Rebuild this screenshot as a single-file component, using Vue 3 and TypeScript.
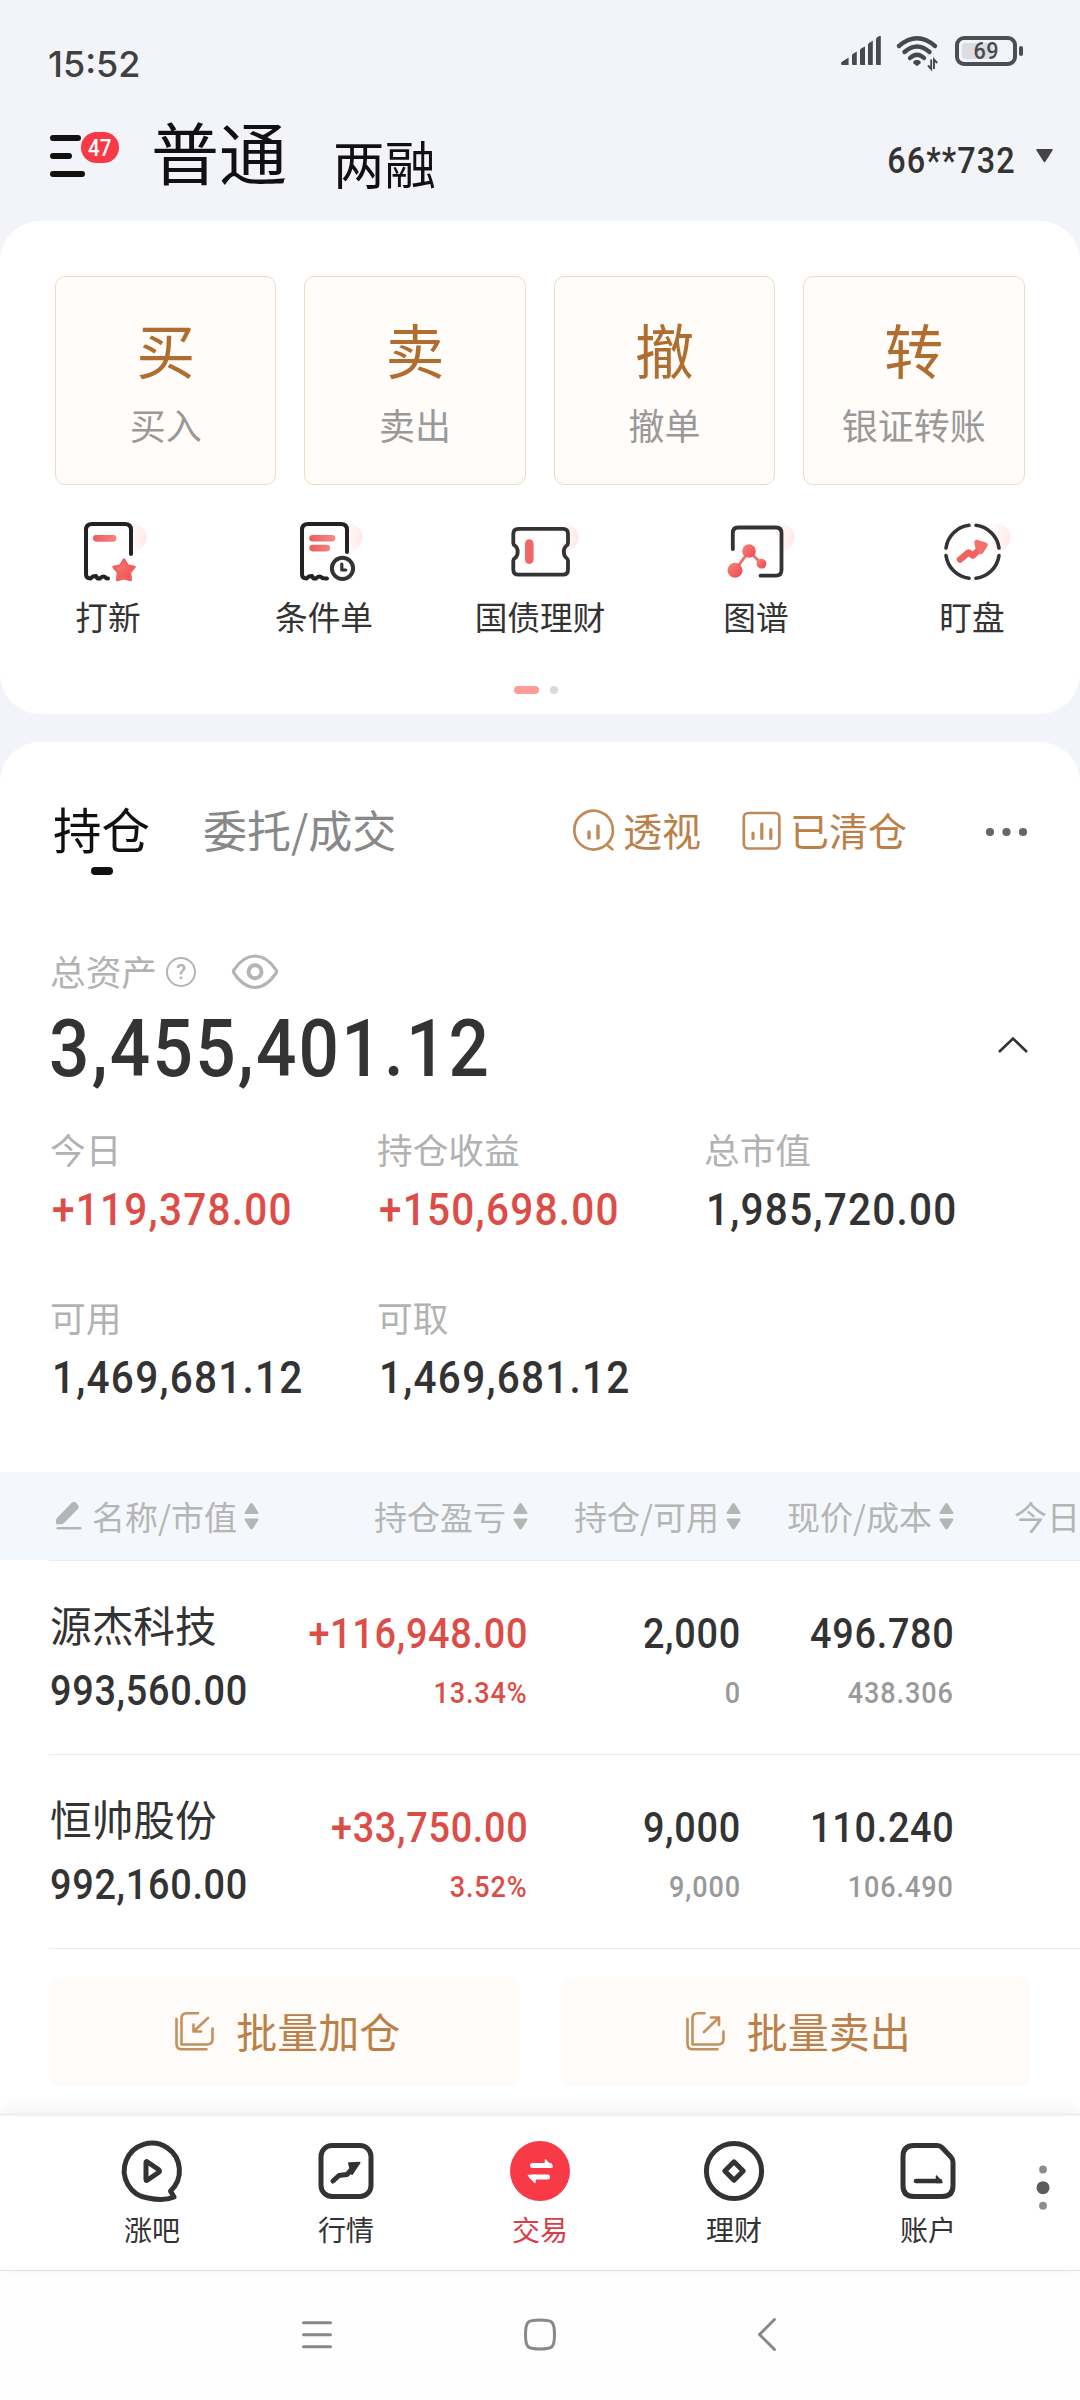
<script setup lang="ts">
interface Tile { big: string; label: string }
interface Shortcut { id: string; label: string }
interface Stat { label: string; value: string; up?: boolean }
interface Holding {
  name: string
  marketValue: string
  profit: string
  rate: string
  amount: string
  available: string
  price: string
  cost: string
}

const tiles: Tile[] = [
  { big: '买', label: '买入' },
  { big: '卖', label: '卖出' },
  { big: '撤', label: '撤单' },
  { big: '转', label: '银证转账' },
]

const shortcuts: Shortcut[] = [
  { id: 'ipo', label: '打新' },
  { id: 'condition', label: '条件单' },
  { id: 'bond', label: '国债理财' },
  { id: 'graph', label: '图谱' },
  { id: 'watch', label: '盯盘' },
]

const stats: Stat[] = [
  { label: '今日', value: '+119,378.00', up: true },
  { label: '持仓收益', value: '+150,698.00', up: true },
  { label: '总市值', value: '1,985,720.00' },
  { label: '可用', value: '1,469,681.12' },
  { label: '可取', value: '1,469,681.12' },
]

const columns: string[] = ['名称/市值', '持仓盈亏', '持仓/可用', '现价/成本']

const holdings: Holding[] = [
  {
    name: '源杰科技', marketValue: '993,560.00', profit: '+116,948.00', rate: '13.34%',
    amount: '2,000', available: '0', price: '496.780', cost: '438.306',
  },
  {
    name: '恒帅股份', marketValue: '992,160.00', profit: '+33,750.00', rate: '3.52%',
    amount: '9,000', available: '9,000', price: '110.240', cost: '106.490',
  },
]

const tabs: Shortcut[] = [
  { id: 'bar', label: '涨吧' },
  { id: 'market', label: '行情' },
  { id: 'trade', label: '交易' },
  { id: 'wealth', label: '理财' },
  { id: 'account', label: '账户' },
]
const activeTab = 'trade'
</script>

<template>
  <div class="screen">
    <svg class="defs" width="0" height="0" aria-hidden="true">
      <defs>
        <linearGradient id="coralDown" x1="0" y1="0" x2="1" y2="1">
          <stop offset="0" stop-color="#f58878" />
          <stop offset="1" stop-color="#ef444e" />
        </linearGradient>
        <linearGradient id="coralBar" gradientUnits="userSpaceOnUse" x1="21" y1="0" x2="46" y2="0">
          <stop offset="0" stop-color="#ee5a5e" />
          <stop offset="1" stop-color="#f48a80" />
        </linearGradient>
        <linearGradient id="blush" x1="0" y1="0" x2="1" y2="0">
          <stop offset="0.2" stop-color="#ffeaea" stop-opacity="0" />
          <stop offset="1" stop-color="#ffe9e9" />
        </linearGradient>
      </defs>
    </svg>

    <header class="status">
      <span class="clock">15:52</span>
      <div class="status-icons">
        <svg class="signal" width="40" height="30" viewBox="0 0 40 30" fill="#46494d">
          <path d="M0 27.5Q0 26.4 1 25.8L7.6 21.6V29H1.5Q0 29 0 27.5Z" />
          <path d="M11 19.5Q11 18.3 12 17.7L15.8 15.5V29H12Q11 29 11 28Z" />
          <path d="M19 14.5Q19 13.3 20 12.6L24 10.4V29H20Q19 29 19 28Z" />
          <path d="M27 9Q27 7.6 28 7L31.8 4.8V29H28Q27 29 27 28Z" />
          <path d="M35 4Q35 2.5 36 1.6Q37.4 0 38.6 0H39.8V29H36Q35 29 35 28Z" />
        </svg>
        <svg class="wifi" width="44" height="35" viewBox="0 0 44 35">
          <g fill="none" stroke="#46494d" stroke-width="4.4" stroke-linecap="round">
            <path d="M3 10Q21 -5.500 39 10" />
            <path d="M8.500 16Q21 5 33.500 16" />
            <path d="M14 22Q21 15.500 28 22" />
          </g>
          <path d="M21 24C24 24 25.500 26 24.500 27.200L22 29.600Q21 30.400 20 29.600L17.500 27.200C16.500 26 18 24 21 24Z" fill="#46494d" />
          <path d="M35.200 23.500V33L32 29.500M38 33V23.500L41.200 27" fill="none" stroke="#46494d" stroke-width="1.900" />
        </svg>
        <div class="battery"><i class="charge" /><span>69</span></div>
        <i class="battery-tip" />
      </div>
    </header>

    <div class="topbar">
      <div class="menu">
        <svg width="36" height="42" viewBox="0 0 36 42" fill="none" stroke="#111" stroke-width="6" stroke-linecap="round">
          <path d="M3 3H28M3 21H19M3 39H32" />
        </svg>
        <span class="badge"><b>47</b></span>
      </div>
      <span class="mode active">普通</span>
      <span class="mode">两融</span>
      <span class="account-no">66**732</span>
      <svg class="caret" width="17" height="14" viewBox="0 0 17 14"><path d="M1 0H16Q17.500 0 16.500 1.500L9.500 12.500Q8.500 14 7.500 12.500L0.500 1.500Q-0.500 0 1 0Z" fill="#444" /></svg>
    </div>

    <section class="card actions">
      <div class="tiles">
        <div v-for="t in tiles" :key="t.big" class="tile">
          <span class="tile-big">{{ t.big }}</span>
          <span class="tile-label">{{ t.label }}</span>
        </div>
      </div>
      <div class="shortcuts">
        <div v-for="s in shortcuts" :key="s.id" class="shortcut">
          <svg width="72" height="72" viewBox="0 0 72 72" fill="none" stroke-linecap="round" stroke-linejoin="round">
            <circle cx="61" cy="21.500" r="13.500" fill="url(#blush)" />
            <template v-if="s.id === 'ipo'">
              <path d="M59 38V14Q59 8 53 8H20Q14 8 14 14V58Q14 62.500 18.500 62.500Q21 59.500 24 60Q25 63 28 62.500Q30.500 59.500 33 61Q34.500 63 36 62.500" fill="#fff" stroke="#222" stroke-width="4" />
              <path d="M24.500 22.300H41" stroke="url(#coralBar)" stroke-width="6.500" transform="translate(0 0.010)" />
              <rect x="21.300" y="19" width="23" height="6.600" rx="3.300" fill="url(#coralBar)" />
              <path d="M52 43.500L55.500 49.500L62.500 51L58 56.500L58.800 64L52 62.200L45.200 64L46 56.500L41.500 51L48.500 49.500Z" fill="url(#coralDown)" stroke="#f2605f" stroke-width="2.500" />
            </template>
            <template v-else-if="s.id === 'condition'">
              <path d="M59 36V14Q59 8 53 8H20Q14 8 14 14V58Q14 62.500 18.500 62.500Q21 59.500 24 60Q25 63 28 62.500Q30.500 59.500 33 61Q34.500 63 39 62.500" fill="#fff" stroke="#222" stroke-width="4" />
              <rect x="21.300" y="19" width="26" height="6.600" rx="3.300" fill="url(#coralBar)" />
              <rect x="21.300" y="28.800" width="20.700" height="6.600" rx="3.300" fill="url(#coralBar)" />
              <circle cx="54.500" cy="52.300" r="10.600" fill="#fff" stroke="#333" stroke-width="4" />
              <path d="M53.800 48V54H57.800" stroke="#333" stroke-width="3.200" />
            </template>
            <template v-else-if="s.id === 'bond'">
              <path d="M14.500 12.800H59Q64 12.800 64 18V27Q64 28.800 62.500 29.600Q59.800 31.800 59.800 35.700Q59.800 39.800 62.500 42Q64 43 64 44.800V53.500Q64 58.700 59 58.700H14.500Q9.300 58.700 9.300 53.500V44.800Q9.300 43 11 42Q13.700 39.800 13.700 35.700Q13.700 31.800 11 29.600Q9.300 28.800 9.300 27V18Q9.300 12.800 14.500 12.800Z" stroke="#333" stroke-width="3.800" />
              <path d="M25.300 27.500V43.800" stroke="#f0686a" stroke-width="8.600" />
            </template>
            <template v-else-if="s.id === 'graph'">
              <path d="M12.800 33V17Q12.800 11.500 18 11.500H56Q61.500 11.500 61.500 17V54Q61.500 59.700 56 59.700H40.500" stroke="#333" stroke-width="3.800" />
              <path d="M15 54.500L29 35L41.500 47.700" stroke="#f2706a" stroke-width="3" />
              <circle cx="29" cy="35" r="6.800" fill="url(#coralDown)" />
              <circle cx="15" cy="54.300" r="7.500" fill="url(#coralDown)" />
              <circle cx="41.500" cy="47.700" r="4.900" fill="url(#coralDown)" />
            </template>
            <template v-else>
              <path d="M33 9.200A26.600 26.600 0 0 0 10 32M40 9.200A26.600 26.600 0 0 1 63 32M10 39.500A26.600 26.600 0 0 0 33 62.300M63 39.500A26.600 26.600 0 0 1 40 62.300" stroke="#333" stroke-width="3.600" />
              <path d="M24 43.500L32.500 36.500L37 39.500L46 31" stroke="#f2605f" stroke-width="6.500" />
              <path d="M40.500 26L49.500 29L45 36L41.500 31Z" fill="#f4706b" stroke="#f4706b" stroke-width="4.500" />
            </template>
          </svg>
          <span>{{ s.label }}</span>
        </div>
      </div>
      <div class="pager"><i class="on" /><i /></div>
    </section>

    <section class="card assets">
      <div class="tabs">
        <div class="tab selected">持仓<i /></div>
        <div class="tab">委托/成交</div>
        <div class="tools">
          <svg width="42" height="42" viewBox="0 0 42 42" fill="none" stroke="#c08a58" stroke-width="2.700" stroke-linecap="round">
            <path d="M33.500 34.500A19.300 19.300 0 1 0 30 37L33.500 34.500L39.300 39.300" stroke-linejoin="round" />
            <path d="M16 22V28M25 16V28" stroke-width="3.400" />
          </svg>
          <span class="tool-text first">透视</span>
          <svg width="40" height="42" viewBox="0 0 40 42" fill="none" stroke="#c08a58" stroke-width="2.700" stroke-linecap="round">
            <rect x="1.800" y="3" width="35.500" height="35.500" rx="4.500" />
            <path d="M11 23V28.500M19.800 14V28.500M28.800 19.500V28.500" stroke-width="3.200" />
          </svg>
          <span class="tool-text">已清仓</span>
          <svg class="more" width="42" height="10" viewBox="0 0 42 10" fill="#666"><circle cx="5" cy="5" r="4.100" /><circle cx="21.500" cy="5" r="4.100" /><circle cx="38" cy="5" r="4.100" /></svg>
        </div>
      </div>

      <div class="total-label">
        <span>总资产</span>
        <svg width="32" height="32" viewBox="0 0 32 32">
          <circle cx="16" cy="16" r="14" fill="none" stroke="#b4b4b4" stroke-width="2" />
          <text x="16" y="22.500" text-anchor="middle" class="help-mark">?</text>
        </svg>
        <svg class="eye" width="48" height="38" viewBox="0 0 48 38" fill="none" stroke="#b4b4b4" stroke-width="3.200">
          <path d="M3 19Q1.800 18 3 16.800Q12.500 3 24 3Q35.500 3 45 16.800Q46.200 18.500 45 20.200Q35.500 34.500 24 34.500Q12.500 34.500 3 20.200Q2 18.500 3 16.800" />
          <circle cx="24" cy="18.800" r="6.500" stroke-width="4" />
        </svg>
      </div>
      <div class="total-row">
        <span class="total">3,455,401.12</span>
        <svg width="32" height="18" viewBox="0 0 32 18" fill="none" stroke="#333" stroke-width="2.600"><path d="M2 15L16 1.500L30 15" /></svg>
      </div>

      <div class="stats">
        <div v-for="s in stats" :key="s.label" class="stat">
          <span class="stat-label">{{ s.label }}</span>
          <span class="stat-value" :class="{ up: s.up }">{{ s.value }}</span>
        </div>
      </div>

      <div class="table">
        <div class="grid thead">
          <div v-for="(c, i) in columns" :key="c" class="th">
            <svg v-if="i === 0" class="pencil" width="26" height="30" viewBox="0 0 26 30" fill="#b5b5b5">
              <path d="M1.500 16.500L16 1.600Q18 0 19.800 1.600L22 4Q23.500 6 22 7.800L8 22Q6.500 23.300 4.500 23.300H1Q0 23.300 0 22.300V19.500Q0 18 1.500 16.500Z" />
              <rect x="0.500" y="26" width="25" height="2.600" rx="1.300" />
            </svg>
            <span>{{ c }}</span>
            <svg class="sort" width="15" height="27" viewBox="0 0 15 27" fill="#b5b5b5">
              <path d="M7.500 0Q8.300 0 9 1L14.300 9.500Q15 11 13.500 11H1.500Q0 11 0.700 9.500L6 1Q6.700 0 7.500 0Z" />
              <path d="M7.500 26.500Q8.300 26.500 9 25.500L14.300 17Q15 15.500 13.500 15.500H1.500Q0 15.500 0.700 17L6 25.500Q6.700 26.500 7.500 26.500Z" />
            </svg>
          </div>
          <div class="th last">今日</div>
        </div>
        <div v-for="h in holdings" :key="h.name" class="grid row">
          <div class="cell name"><span class="stock">{{ h.name }}</span><span class="num">{{ h.marketValue }}</span></div>
          <div class="cell up"><span class="num">{{ h.profit }}</span><span class="sub">{{ h.rate }}</span></div>
          <div class="cell"><span class="num">{{ h.amount }}</span><span class="sub">{{ h.available }}</span></div>
          <div class="cell"><span class="num">{{ h.price }}</span><span class="sub">{{ h.cost }}</span></div>
        </div>
      </div>

      <div class="batch">
        <button type="button">
          <svg width="42" height="42" viewBox="0 0 42 42" fill="none" stroke="#c4905e" stroke-width="2.600" stroke-linecap="round" stroke-linejoin="round">
            <path d="M25 3.200H14Q8.500 3.200 8.500 8.500V34.500H34Q39.500 34.500 39.500 29V18.500M3.500 9V34Q3.500 39.300 9 39.300H33.500" />
            <path d="M35 8L20.500 21.500M20.500 14.500V21.500H28" />
          </svg>
          <span>批量加仓</span>
        </button>
        <button type="button">
          <svg width="42" height="42" viewBox="0 0 42 42" fill="none" stroke="#c4905e" stroke-width="2.600" stroke-linecap="round" stroke-linejoin="round">
            <path d="M20.500 3.200H14Q8.500 3.200 8.500 8.500V34.500H34Q39.500 34.500 39.500 29V21.500M3.500 9V34Q3.500 39.300 9 39.300H33.500" />
            <path d="M20 22L35 7.500M27 7.500H35V15" />
          </svg>
          <span>批量卖出</span>
        </button>
      </div>
    </section>

    <nav class="tabbar">
      <div v-for="t in tabs" :key="t.id" class="tabitem" :class="{ current: t.id === activeTab }">
        <svg width="64" height="64" viewBox="0 0 64 64" fill="none" stroke="#333" stroke-width="5" stroke-linejoin="round" stroke-linecap="round">
          <template v-if="t.id === 'bar'">
            <path d="M50.500 52A27.600 27.600 0 1 0 28 59Q44 62.500 54 58L50.500 52Z" />
            <path d="M26 23.500Q26 22 27.500 23L38.500 30.500Q40.500 32 38.500 33.500L27.500 41Q26 42 26 40.500Z" />
          </template>
          <template v-else-if="t.id === 'market'">
            <rect x="7" y="6.500" width="50" height="51" rx="11" />
            <path d="M19 42L25 36.500L33 35.500L40 28" />
            <path d="M35 24.200L45.500 23.700L38 35Z" fill="#333" stroke-width="2" />
          </template>
          <template v-else-if="t.id === 'trade'">
            <circle cx="32" cy="32" r="30" fill="#f83a47" stroke="none" />
            <path d="M24.500 26.500H42M24 38H39.500" stroke="#fff" />
            <path d="M37.500 21L44 28H37.500ZM27 43.500L20.500 36.500H27Z" fill="#fff" stroke="#fff" stroke-width="1.500" />
          </template>
          <template v-else-if="t.id === 'wealth'">
            <circle cx="32" cy="32" r="27.600" />
            <path d="M32 22.800L41.200 32L32 41.200L22.800 32Z" />
          </template>
          <template v-else>
            <path d="M18 6.500H41Q44 6.500 46 8.500L54.500 17.500Q57 20 57 23V46.500Q57 57.500 46 57.500H18Q7 57.500 7 46.500V17.500Q7 6.500 18 6.500Z" />
            <path d="M20 42H44" stroke-width="4.600" />
            <path d="M40.500 37L46 43.400H40.500Z" fill="#333" stroke-width="1.500" />
          </template>
        </svg>
        <span>{{ t.label }}</span>
      </div>
      <svg class="dots" width="14" height="48" viewBox="0 0 14 48"><circle cx="7" cy="5.500" r="3.900" fill="#8d8d8d" /><circle cx="7" cy="23.700" r="6.500" fill="#5c5c5c" /><circle cx="7" cy="41.700" r="3.900" fill="#8d8d8d" /></svg>
    </nav>

    <footer class="sysnav">
      <svg width="34" height="34" viewBox="0 0 34 34" fill="none" stroke="#888" stroke-width="3" stroke-linecap="round"><path d="M3.500 4.700H30.500M3.500 16.700H30.500M3.500 28.700H30.500" /></svg>
      <svg width="34" height="34" viewBox="0 0 34 34" fill="none" stroke="#888" stroke-width="3"><path d="M17 2C29.500 2 31.500 3.500 31.500 16.500S29.500 31 17 31S2.500 29.500 2.500 16.500S4.500 2 17 2Z" /></svg>
      <svg width="34" height="34" viewBox="0 0 34 34" fill="none" stroke="#888" stroke-width="3" stroke-linecap="round" stroke-linejoin="round"><path d="M28.500 1.500L13.500 16.500L28.500 31.500" /></svg>
    </footer>
  </div>
</template>

<style>
body {
  margin: 0;
  background: #f3f4f9;
}
</style>

<style scoped>
.screen {
  width: 1080px;
  height: 2400px;
  overflow: hidden;
  display: flex;
  flex-direction: column;
  background: #f3f4f9;
  color: #333;
  font-family: "Noto Sans CJK SC", sans-serif;
}
.defs { position: absolute; }
svg { display: block; flex: none; overflow: visible; }
span { white-space: nowrap; }

.status {
  height: 104px;
  flex: none;
  display: flex;
  justify-content: space-between;
  padding: 0 57px 0 48px;
}
.clock {
  margin-top: 42px;
  height: 44px;
  font: 500 36px/44px Inter, sans-serif;
  color: #404040;
}
.status-icons { display: flex; align-items: flex-start; padding-top: 36px; }
.wifi { margin: 0 0 0 15px; }
.battery {
  box-sizing: border-box;
  position: relative;
  width: 62px;
  height: 30px;
  margin-left: 15px;
  border: 4px solid #4b4e52;
  border-radius: 9px;
  display: flex;
  align-items: center;
  justify-content: center;
  font: 500 24px/24px Roboto, sans-serif;
  letter-spacing: 0.500px;
  color: #46494d;
}
.battery span { position: relative; transform: scaleX(0.9); }
.charge {
  position: absolute;
  left: 3px;
  top: 3px;
  width: 31px;
  height: 16px;
  border-radius: 3px;
  background: #dcdde1;
}
.battery-tip {
  width: 4px;
  height: 10px;
  margin: 10px 0 0 2px;
  border-radius: 2px;
  background: #4b4e52;
}

.topbar {
  height: 117px;
  flex: none;
  display: flex;
  align-items: flex-start;
  padding: 0 27px 0 50px;
  color: #111;
}
.menu { position: relative; width: 101px; padding-top: 31px; }
.badge {
  position: absolute;
  left: 31px;
  top: 28px;
  width: 38px;
  height: 31px;
  border-radius: 16px;
  background: #f83a47;
  color: #fff;
  text-align: center;
  font: 500 24px/32px Roboto, sans-serif;
}
.badge b { display: inline-block; font-weight: 500; transform: scaleX(0.86); }
.mode { margin-top: 18px; font-size: 51.500px; line-height: 80px; color: #111; }
.mode.active { margin-top: 7px; margin-right: 46px; font-size: 68px; }
.account-no {
  margin: 35px 20px 0 auto;
  font: 500 36px/44px Roboto, sans-serif;
  letter-spacing: 1.200px;
  color: #333;
  transform: scaleX(0.9);
  transform-origin: right;
}
.caret { margin-top: 45px; }

.card { background: #fff; flex: none; }
.actions {
  height: 493px;
  margin-bottom: 28px;
  border-radius: 40px;
  box-sizing: border-box;
  padding-top: 55px;
}
.tiles { display: flex; gap: 28px; padding: 0 55.500px 0 55px; }
.tile {
  box-sizing: border-box;
  flex: 1;
  height: 209px;
  border: 1px solid #e9dcca;
  border-radius: 10px;
  background: #fffcf9;
  display: flex;
  flex-direction: column;
  align-items: center;
  padding-top: 31px;
}
.tile-big { font-size: 59px; line-height: 82px; color: #b06d30; }
.tile-label { margin-top: 10px; font-size: 36px; line-height: 48px; color: #999; }
.shortcuts { display: flex; margin-top: 31px; }
.shortcut {
  width: 216px;
  display: flex;
  flex-direction: column;
  align-items: center;
  font-size: 32.700px;
  line-height: 44px;
}
.shortcut span { margin-top: 6px; }
.pager { display: flex; justify-content: center; gap: 11px; margin-top: 48px; padding-right: 8px; }
.pager i { width: 8px; height: 8px; border-radius: 4px; background: #d9d9d9; }
.pager .on { width: 25px; background: #ff9c98; }

.assets { flex: 1; border-radius: 40px 40px 0 0; min-height: 0; }
.tabs { height: 178px; display: flex; align-items: center; padding-left: 53px; padding-right: 53px; }
.tab { position: relative; font-size: 44px; line-height: 64px; color: #888; margin-bottom: 5px; }
.tab.selected { margin-right: 53px; margin-bottom: 7px; font-size: 48.500px; color: #111; }
.tab i {
  position: absolute;
  left: 38px;
  top: 71px;
  width: 22px;
  height: 8px;
  border-radius: 4px;
  background: #111;
}
.tools { display: flex; align-items: center; margin-left: auto; }
.tool-text { margin: -4px 0 0 8px; font-size: 39px; line-height: 56px; color: #bb8047; }
.tool-text.first { margin-right: 41px; }
.more { margin-left: 78px; margin-top: 1px; }

.total-label { display: flex; align-items: center; height: 48px; margin-top: 28px; padding-left: 50px; }
.total-label span { font-size: 35.700px; line-height: 48px; color: #b2b2b2; margin: -3px 8px 0 0; }
.help-mark { font: 500 20px Roboto, sans-serif; fill: #b0b0b0; }
.eye { margin-left: 34px; }
.total-row { display: flex; justify-content: space-between; align-items: center; height: 92px; margin-top: 4px; padding: 0 51px 0 49px; }
.total {
  margin-top: 5px;
  font: 500 79px/92px Roboto, sans-serif;
  letter-spacing: 2.500px;
  transform: scaleX(0.9);
  transform-origin: left;
}

.stats {
  display: grid;
  grid-template-columns: 327px 327px 327px;
  padding-left: 50px;
  margin-top: 33px;
  height: 347px;
  grid-auto-rows: 168px;
}
.stat { display: flex; flex-direction: column; align-items: flex-start; }
.stat-label { font-size: 35.700px; line-height: 48px; color: #b2b2b2; }
.stat-value {
  margin: 9px 0 0 1.500px;
  font: 500 45px/56px Roboto, sans-serif;
  letter-spacing: 1.400px;
  transform: scaleX(0.9);
  transform-origin: left;
}
.up { color: #dd4d48; }

.grid {
  display: grid;
  grid-template-columns: 251px 228px 213px 213px 126px;
  margin-left: 49px;
}
.table { overflow: hidden; background: linear-gradient(#f4f7fb 88px, #fff 88px); }
.thead { height: 88px; border-bottom: 1px solid #e9eaec; }
.th { display: flex; align-items: center; justify-content: flex-end; font-size: 33px; line-height: 48px; color: #b5b5b5; }
.th span { margin-top: -1px; }
.th:first-child { justify-content: flex-start; padding-left: 7px; }
.th.last { justify-content: flex-start; padding-left: 60px; line-height: 46px; }
.pencil { margin-right: 10px; }
.sort { margin-left: 7px; }
.row { height: 193px; border-bottom: 1px solid #ebebeb; }
.cell { display: flex; flex-direction: column; align-items: flex-end; padding-top: 48px; }
.cell.name { align-items: flex-start; padding: 33px 0 0 1px; }
.stock { font-size: 41.700px; line-height: 60px; }
.num, .sub { transform: scaleX(0.9); transform-origin: right; }
.cell.name .num { transform-origin: left; }
.num { font: 500 42px/50px Roboto, sans-serif; letter-spacing: 0.800px; }
.cell.name .num { margin-top: 12px; }
.sub { margin-top: 16px; font: 500 30px/36px Roboto, sans-serif; letter-spacing: 1px; color: #999; }
.up .sub { color: #dd4d48; }

.batch { display: flex; gap: 41px; padding: 28px 50px 0; }
.batch button {
  flex: 1;
  height: 109px;
  border: 0;
  padding: 0;
  border-radius: 10px;
  background: #fffbf8;
  color: #bb8047;
  display: flex;
  align-items: center;
  justify-content: center;
  font: 400 41px/56px "Noto Sans CJK SC", sans-serif;
}
.batch svg { margin: -1px 0 0 4px; }
.batch span { margin: -4px 0 0 21px; }

.tabbar {
  position: relative;
  flex: none;
  box-sizing: border-box;
  height: 158px;
  border-top: 3px solid #f1f1f1;
  border-bottom: 1px solid #dedede;
  background: #fff;
  box-shadow: 0 -4px 18px rgba(0, 0, 0, 0.05);
  display: flex;
  padding: 23px 30px 0 55px;
}
.tabitem {
  width: 194px;
  flex: none;
  display: flex;
  flex-direction: column;
  align-items: center;
  font-size: 28px;
  line-height: 40px;
}
.tabitem span { margin-top: 6px; }
.current { color: #dc3c48; }
.dots { margin: 25px 0 0 11px; }

.sysnav {
  flex: none;
  box-sizing: border-box;
  height: 129px;
  background: #fefefe;
  display: flex;
  align-items: center;
  gap: 189px;
  padding: 0 0 1px 300px;
}
</style>
